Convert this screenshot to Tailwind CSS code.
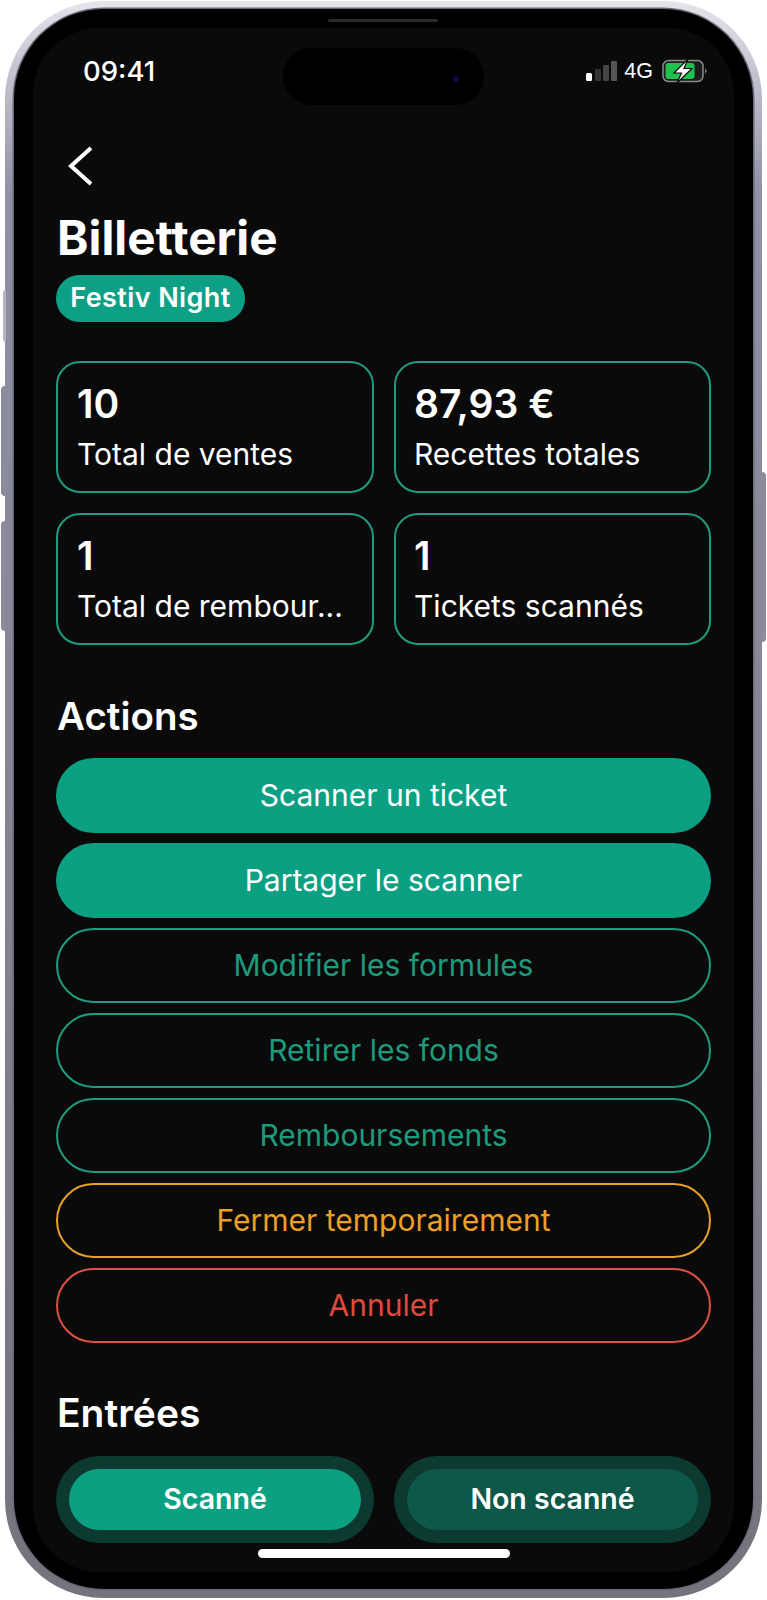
<!DOCTYPE html>
<html lang="fr"><head><meta charset="utf-8"><script src="https://cdn.jsdelivr.net/npm/@tailwindcss/browser@4"></script></head>
<body class="bg-white m-0">
<div class="relative w-[767px] h-[1600px] bg-white pt-[1px] pl-[5px] font-['Inter',sans-serif] overflow-hidden">
  <!-- side buttons -->
  <div class="absolute left-[3px] top-[290px] w-[3px] h-[52px] rounded-l-sm bg-[#b4b4c0]"></div>
  <div class="absolute left-[1px] top-[386px] w-[5px] h-[110px] rounded-l-sm bg-[#8b8b9d]"></div>
  <div class="absolute left-[1px] top-[521px] w-[5px] h-[110px] rounded-l-sm bg-[#8b8b9d]"></div>
  <div class="absolute right-[1px] top-[472px] w-[5px] h-[170px] rounded-r-sm bg-[#8b8b9d]"></div>
  <!-- metal frame -->
  <div class="w-[757px] h-[1597px] rounded-[98px] pt-[8px] px-[9px] bg-linear-to-b from-[#e4e4ea] via-[#9090a6] via-[12%] to-[#74747c]">
    <!-- black bezel -->
    <div class="relative w-[739px] h-[1580px] rounded-[90px] bg-black pt-[19px] px-[19px] shadow-[0_0_0_1.5px_#6a6a78]">
      <div class="absolute left-[314px] top-[10px] w-[110px] h-[3px] rounded-full bg-[#2a2a2e]"></div>
      <!-- screen -->
      <div class="relative w-[701px] h-[1544px] rounded-[66px] bg-[#0a0a0a] overflow-hidden text-white">
        <!-- dynamic island -->
        <div class="absolute left-[250px] top-[20px] w-[201px] h-[57px] rounded-full bg-black flex items-center justify-end pr-[25px]">
          <div class="w-[6px] h-[6px] rounded-full bg-[#0c0c4a] mt-[5px]"></div>
        </div>
        <!-- status bar -->
        <div class="h-[77px] pt-[26px] pl-[50px] pr-[26px] flex items-start justify-between">
          <span class="text-[27.5px] leading-[34px] font-medium">09:41</span>
          <div class="flex items-center gap-[6px] h-[34px]">
            <svg width="32" height="22" viewBox="0 0 32 22"><rect x="0" y="13" width="6" height="8" rx="1.5" fill="#fff"/><rect x="9" y="9" width="6" height="12" rx="1" fill="#333"/><rect x="17" y="5" width="6" height="16" rx="1" fill="#444"/><rect x="25" y="1" width="6" height="20" rx="1" fill="#555"/></svg>
            <span class="text-[21.5px] leading-[34px] font-['Liberation_Sans',sans-serif]">4G</span>
            <svg width="46" height="24" viewBox="0 0 46 24" class="ml-[3px]"><rect x="1" y="1.5" width="40" height="21" rx="5.5" fill="#1c1c1c" stroke="#8a8a8a" stroke-width="1.5"/><rect x="3.5" y="4" width="29" height="16" rx="3" fill="#1fc24f"/><path d="M43 9 L45 12 L43 15Z" fill="#777"/><path d="M26 0 L12 14 H19.5 L15 24 L30 9.5 H22 Z" fill="#fff" stroke="#0a0a0a" stroke-width="1.2"/></svg>
          </div>
        </div>
        <!-- content -->
        <div class="px-[23px]">
          <svg width="30" height="46" viewBox="0 0 30 46" class="mt-[38px] ml-[11px]" fill="none" stroke="#fff" stroke-width="4"><path d="M24 5 L4 23 L24 41"/></svg>
          <h1 class="mt-[21px] ml-[1px] text-[47.6px] leading-[56px] font-bold">Billetterie</h1>
          <div class="mt-[9px] inline-flex items-center h-[47px] w-[189px] justify-center rounded-full bg-[#0ea084] text-[27px] tracking-[0.4px] font-semibold">Festiv Night</div>
          <div class="mt-[39px] grid grid-cols-[318px_317px] gap-[20px]">
            <div class="h-[132px] rounded-[24px] border-2 border-[#1f9c7e] pl-[19px] pt-[16px]"><div class="text-[39px] leading-[50px] font-semibold">10</div><div class="mt-[3px] text-[30px] leading-[44px] truncate">Total de ventes</div></div>
            <div class="h-[132px] rounded-[24px] border-2 border-[#1f9c7e] pl-[18px] pt-[16px]"><div class="text-[39px] leading-[50px] font-semibold">87,93 €</div><div class="mt-[3px] text-[30px] leading-[44px] truncate">Recettes totales</div></div>
            <div class="h-[132px] rounded-[24px] border-2 border-[#1f9c7e] pl-[19px] pt-[16px]"><div class="text-[39px] leading-[50px] font-semibold">1</div><div class="mt-[3px] text-[30px] leading-[44px] truncate">Total de rembour...</div></div>
            <div class="h-[132px] rounded-[24px] border-2 border-[#1f9c7e] pl-[18px] pt-[16px]"><div class="text-[39px] leading-[50px] font-semibold">1</div><div class="mt-[3px] text-[30px] leading-[44px] truncate">Tickets scannés</div></div>
          </div>
          <h2 class="mt-[47px] ml-[1px] text-[38.5px] leading-[48px] font-semibold">Actions</h2>
          <div class="mt-[18px] flex flex-col gap-[10px] text-[30px]">
            <div class="h-[75px] rounded-full bg-[#0ca083] flex items-center justify-center">Scanner un ticket</div>
            <div class="h-[75px] rounded-full bg-[#0ca083] flex items-center justify-center">Partager le scanner</div>
            <div class="h-[75px] rounded-full border-2 border-[#1f9c7e] text-[#1e9b7d] flex items-center justify-center">Modifier les formules</div>
            <div class="h-[75px] rounded-full border-2 border-[#1f9c7e] text-[#1e9b7d] flex items-center justify-center">Retirer les fonds</div>
            <div class="h-[75px] rounded-full border-2 border-[#1f9c7e] text-[#1e9b7d] flex items-center justify-center">Remboursements</div>
            <div class="h-[75px] rounded-full border-2 border-[#e8a02c] text-[#ee9f26] flex items-center justify-center">Fermer temporairement</div>
            <div class="h-[75px] rounded-full border-2 border-[#dd5044] text-[#e0493d] flex items-center justify-center">Annuler</div>
          </div>
          <h2 class="mt-[46px] ml-[1px] text-[39px] leading-[48px] font-semibold">Entrées</h2>
          <div class="mt-[19px] grid grid-cols-[318px_317px] gap-[20px]">
            <div class="h-[87px] rounded-full bg-[#0c3a30] p-[13px]"><div class="h-[61px] rounded-full bg-[#0ca083] flex items-center justify-center text-[28.5px] font-semibold">Scanné</div></div>
            <div class="h-[87px] rounded-full bg-[#0c3a30] p-[13px]"><div class="h-[61px] rounded-full bg-[#0d5849] flex items-center justify-center text-[28.5px] font-semibold">Non scanné</div></div>
          </div>
        </div>
        <!-- home indicator -->
        <div class="absolute left-[225px] top-[1521px] w-[252px] h-[9px] rounded-full bg-white"></div>
      </div>
    </div>
  </div>
</div>
</body></html>
